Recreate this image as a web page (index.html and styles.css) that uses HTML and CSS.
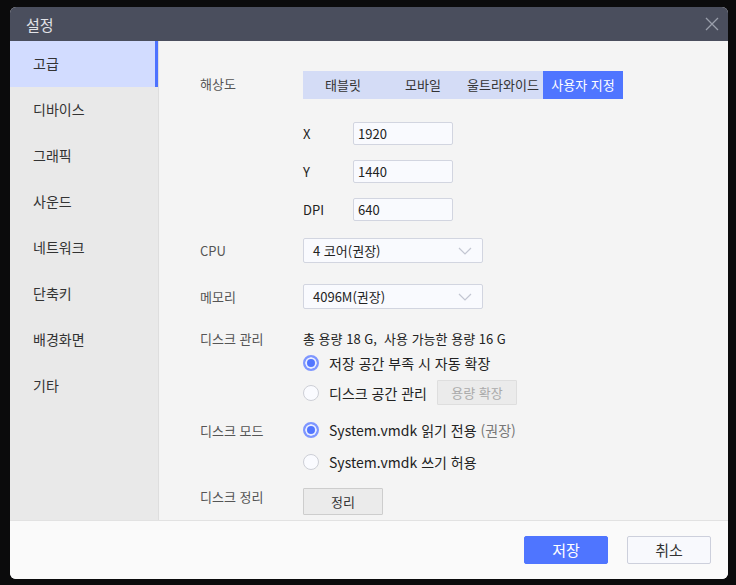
FILE: index.html
```html
<!DOCTYPE html>
<html lang="ko">
<head>
<meta charset="utf-8">
<title>설정</title>
<link rel="stylesheet" href="styles.css">
</head>
<body>
<div class="dialog">
  <div class="titlebar">
    <span class="title">설정</span>
    <svg class="close" width="14" height="14" viewBox="0 0 14 14"><path d="M1 1L13 13M13 1L1 13" stroke="#9a9eab" stroke-width="1.3" fill="none"/></svg>
  </div>
  <div class="main">
    <nav class="sidebar">
      <div class="nav-item active">고급</div>
      <div class="nav-item">디바이스</div>
      <div class="nav-item">그래픽</div>
      <div class="nav-item">사운드</div>
      <div class="nav-item">네트워크</div>
      <div class="nav-item">단축키</div>
      <div class="nav-item">배경화면</div>
      <div class="nav-item">기타</div>
    </nav>
    <section class="content">
      <div class="row row-res">
        <div class="label">해상도</div>
        <div class="segmented">
          <div class="seg">태블릿</div>
          <div class="seg">모바일</div>
          <div class="seg">울트라와이드</div>
          <div class="seg active">사용자 지정</div>
        </div>
      </div>
      <div class="row sub sub-x">
        <div class="label"></div>
        <div class="sublabel">X</div>
        <div class="input">1920</div>
      </div>
      <div class="row sub sub-y">
        <div class="label"></div>
        <div class="sublabel">Y</div>
        <div class="input">1440</div>
      </div>
      <div class="row sub sub-y">
        <div class="label"></div>
        <div class="sublabel">DPI</div>
        <div class="input">640</div>
      </div>
      <div class="row row-cpu">
        <div class="label">CPU</div>
        <div class="select">4 코어(권장)<svg class="chev" width="14" height="8" viewBox="0 0 14 8"><path d="M1 1L7 7L13 1" stroke="#c3c6d2" stroke-width="1.2" fill="none"/></svg></div>
      </div>
      <div class="row row-mem">
        <div class="label">메모리</div>
        <div class="select">4096M(권장)<svg class="chev" width="14" height="8" viewBox="0 0 14 8"><path d="M1 1L7 7L13 1" stroke="#c3c6d2" stroke-width="1.2" fill="none"/></svg></div>
      </div>
      <div class="row row-disk">
        <div class="label">디스크 관리</div>
        <div class="info">총 용량 18 G,&nbsp; 사용 가능한 용량 16 G</div>
      </div>
      <div class="row row-r1">
        <div class="label"></div>
        <div class="radio on"><span class="dot"></span>저장 공간 부족 시 자동 확장</div>
      </div>
      <div class="row row-r2">
        <div class="label"></div>
        <div class="radio"><span class="dot"></span>디스크 공간 관리</div>
        <div class="btn disabled">용량 확장</div>
      </div>
      <div class="row row-mode">
        <div class="label">디스크 모드</div>
        <div class="radio on"><span class="dot"></span>System.vmdk 읽기 전용 <span class="muted">(권장)</span></div>
      </div>
      <div class="row row-r4">
        <div class="label"></div>
        <div class="radio"><span class="dot"></span>System.vmdk 쓰기 허용</div>
      </div>
      <div class="row row-clean">
        <div class="label">디스크 정리</div>
        <div class="btn">정리</div>
      </div>
    </section>
  </div>
  <div class="footer">
    <div class="fbtn primary">저장</div>
    <div class="fbtn">취소</div>
  </div>
</div>
</body>
</html>
```
FILE: styles.css
```css
* { box-sizing: border-box; }
html, body { margin: 0; padding: 0; }
body {
  width: 736px;
  height: 585px;
  background: #0b0b0c;
  font-family: "Noto Sans CJK KR", "Noto Sans", sans-serif;
  overflow: hidden;
  padding: 7px 8px 6px 10px;
}
.dialog {
  width: 718px;
  height: 572px;
  border-radius: 6px;
  overflow: hidden;
  display: flex;
  flex-direction: column;
  background: #f4f4f4;
}
.titlebar {
  height: 34px;
  flex: none;
  background: #4a4e5d;
  display: flex;
  align-items: center;
  justify-content: space-between;
  padding: 0 9px 0 16px;
}
.title { color: #e2e3e8; font-size: 15px; }
.close { display: block; }
.main { flex: 1; display: flex; min-height: 0; }
.sidebar {
  width: 149px;
  flex: none;
  background: #e9e9e9;
  border-right: 1px solid #dedede;
}
.nav-item {
  height: 46px;
  line-height: 44px;
  padding-left: 23px;
  font-size: 14px;
  color: #333;
}
.nav-item.active {
  background: #d2dcff;
  box-shadow: inset -3px 0 0 #4d72ff;
}
.content {
  flex: 1;
  background: #f4f4f4;
  padding: 30px 0 0 41px;
}
.row { display: flex; align-items: center; }
.label {
  width: 103px;
  flex: none;
  font-size: 13px;
  color: #555;
}
.row-res { height: 28px; }
.row-res .label { margin-top: -3px; }
.segmented {
  display: flex;
  background: #d4dcf6;
  height: 28px;
}
.seg {
  width: 80px;
  text-align: center;
  line-height: 27px;
  font-size: 13px;
  color: #333;
}
.seg.active { background: #4f75ff; color: #fff; }
.sub { height: 23px; }
.sub-x { margin-top: 23px; }
.sub-y { margin-top: 15px; }
.sublabel { width: 50px; font-size: 13px; color: #222; }
.input {
  width: 100px;
  height: 23px;
  border: 1px solid #d2d5e0;
  border-radius: 2px;
  background: #f9fafe;
  font-size: 13px;
  color: #222;
  line-height: 21px;
  padding-left: 4px;
}
.select {
  width: 180px;
  height: 25px;
  border: 1px solid #d2d5e0;
  border-radius: 2px;
  background: #f9fafe;
  font-size: 13px;
  color: #222;
  display: flex;
  align-items: center;
  justify-content: space-between;
  padding: 0 10px 0 9px;
}
.chev { display: block; }
.row-cpu { margin-top: 17px; height: 25px; }
.row-mem { margin-top: 21px; height: 25px; }
.row-disk { margin-top: 19px; height: 20px; }
.info { font-size: 13px; color: #222; }
.row-r1 { margin-top: 5px; height: 20px; }
.row-r2 { margin-top: 7px; height: 25px; }
.row-mode { margin-top: 15px; height: 20px; }
.row-r4 { margin-top: 12px; height: 20px; }
.row-clean { margin-top: 16px; height: 27px; align-items: flex-start; }
.row-clean .label { line-height: 18px; }
.radio {
  display: flex;
  align-items: center;
  font-size: 14px;
  color: #222;
}
.dot {
  width: 16px;
  height: 16px;
  border-radius: 50%;
  border: 1px solid #cdcfd6;
  background: #fafbff;
  margin-right: 10px;
  flex: none;
}
.radio.on .dot {
  border: 2px solid #7e96ff;
  background: #5276ff;
  box-shadow: inset 0 0 0 2px #e9eeff;
}
.muted { color: #777; margin-left: 4px; }
.btn {
  width: 80px;
  height: 27px;
  border: 1px solid #cdcdcd;
  background: #ebebeb;
  border-radius: 1px;
  font-size: 13px;
  color: #333;
  text-align: center;
  line-height: 25px;
}
.btn.disabled {
  height: 25px;
  line-height: 23px;
  border-color: #dedede;
  color: #aaa;
  margin-left: 10px;
}
.footer {
  height: 59px;
  flex: none;
  background: #fafafa;
  border-top: 1px solid #e2e2e2;
  display: flex;
  justify-content: flex-end;
  align-items: center;
  gap: 19px;
  padding: 0 17px 0 0;
}
.fbtn {
  width: 84px;
  height: 28px;
  border: 1px solid #cdd0dc;
  background: #f8f9fd;
  border-radius: 2px;
  font-size: 15px;
  color: #333;
  text-align: center;
  line-height: 26px;
}
.fbtn.primary { background: #4f75ff; border-color: #4f75ff; color: #fff; }
```
